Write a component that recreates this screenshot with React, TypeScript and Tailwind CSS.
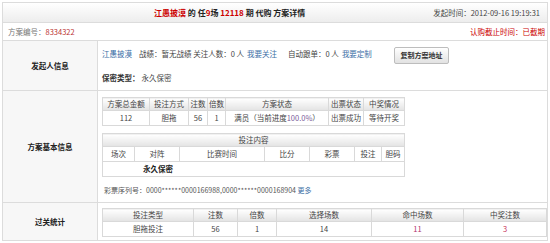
const FONT = '[font-family:"Noto_Sans_CJK_SC","Liberation_Sans",sans-serif]'

const TH = 'border border-[#d9d9d9] bg-gradient-to-b from-white to-[#e3e3e3] font-normal text-[#444] h-[13px] p-0 text-center'
const TD = 'border border-[#d9d9d9] bg-white text-[#444] h-[15px] p-0 text-center'

function Label({ children }: { children: React.ReactNode }) {
  return (
    <div className="flex items-center justify-center bg-[#f7f7f7] border-r border-[#dcdcdc] font-bold text-[#222]">
      {children}
    </div>
  )
}

export default function App() {
  return (
    <div className={`w-[550px] h-[243px] bg-white text-[7.5px] leading-none text-[#444] ${FONT}`}>
      <div className="mx-[2px] mt-[2px] border border-[#dcdcdc]">
        {/* title bar */}
        <div className="flex items-center h-[20px] bg-gradient-to-b from-white to-[#ededed] border-b border-[#dcdcdc]">
          <div className="pl-[151px] text-[8px] font-bold text-[#222] whitespace-nowrap">
            <span className="text-[#c00]">江愚披漠</span> 的 任<span className="text-[#c00]">9</span>场{' '}
            <span className="text-[#c00]">12118</span> 期 代购 方案详情
          </div>
          <div className="ml-auto pr-[7px] text-[#444] whitespace-nowrap">发起时间：2012-09-16 19:19:31</div>
        </div>

        {/* number row */}
        <div className="flex items-center h-[18px] border-b border-[#dcdcdc]">
          <div className="pl-[5px] text-[#777]">
            方案编号：<span className="text-[#b33]">8334322</span>
          </div>
          <div className="ml-auto pr-[2px] text-[#c00]">认购截止时间：已截期</div>
        </div>

        {/* sponsor info */}
        <div className="grid grid-cols-[95px_1fr] h-[50px] border-b border-[#dcdcdc]">
          <Label>发起人信息</Label>
          <div className="pl-[4px] flex flex-col">
            <div className="flex items-center h-[26px] whitespace-nowrap">
              <div className="w-[292px] flex items-center">
                <span className="text-[#3a6ea5]">江愚披漠</span>
                <span className="ml-[7px]">战绩：暂无战绩 关注人数：0 人</span>
                <span className="ml-[3px] text-[#3a6ea5]">我要关注</span>
                <span className="ml-[11px]">自动跟单：0 人</span>
                <span className="ml-[3px] text-[#3a6ea5]">我要定制</span>
              </div>
              <button className="mt-[3px] w-[55px] h-[17px] rounded-[2px] border border-[#bdbdbd] bg-gradient-to-b from-white to-[#e2e2e2] font-bold text-[#333] text-[7px]">
                复制方案地址
              </button>
            </div>
            <div className="flex items-center h-[22px]">
              <span className="font-bold text-[#333]">保密类型：</span>
              <span className="ml-[2px]">永久保密</span>
            </div>
          </div>
        </div>

        {/* basic info */}
        <div className="grid grid-cols-[95px_1fr] h-[112px] border-b border-[#dcdcdc]">
          <Label>方案基本信息</Label>
          <div className="pl-[4px] pt-[6px]">
            <table className="w-[302px] border-collapse table-fixed">
              <colgroup>
                <col className="w-[47px]" />
                <col className="w-[39px]" />
                <col className="w-[19px]" />
                <col className="w-[18px]" />
                <col className="w-[103px]" />
                <col className="w-[35px]" />
                <col className="w-[41px]" />
              </colgroup>
              <thead>
                <tr>
                  <th className={TH}>方案总金额</th>
                  <th className={TH}>投注方式</th>
                  <th className={TH}>注数</th>
                  <th className={TH}>倍数</th>
                  <th className={TH}>方案状态</th>
                  <th className={TH}>出票状态</th>
                  <th className={TH}>中奖情况</th>
                </tr>
              </thead>
              <tbody>
                <tr>
                  <td className={TD}>112</td>
                  <td className={TD}>胆拖</td>
                  <td className={`${TD} text-[#8a7f9a]`}>56</td>
                  <td className={TD}>1</td>
                  <td className={TD}>
                    满员（当前进度<span className="text-[#7a5c9a]">100.0%</span>）
                  </td>
                  <td className={TD}>出票成功</td>
                  <td className={TD}>等待开奖</td>
                </tr>
              </tbody>
            </table>

            <table className="mt-[7px] w-[302px] border-collapse table-fixed">
              <colgroup>
                <col className="w-[32px]" />
                <col className="w-[45px]" />
                <col className="w-[85px]" />
                <col className="w-[45px]" />
                <col className="w-[45px]" />
                <col className="w-[27px]" />
                <col className="w-[23px]" />
              </colgroup>
              <thead>
                <tr>
                  <th colSpan={7} className={TH}>投注内容</th>
                </tr>
                <tr>
                  <td className={`${TD} h-[13px]`}>场次</td>
                  <td className={`${TD} h-[13px]`}>对阵</td>
                  <td className={`${TD} h-[13px]`}>比赛时间</td>
                  <td className={`${TD} h-[13px]`}>比分</td>
                  <td className={`${TD} h-[13px]`}>彩票</td>
                  <td className={`${TD} h-[13px]`}>投注</td>
                  <td className={`${TD} h-[13px]`}>胆码</td>
                </tr>
              </thead>
              <tbody>
                <tr>
                  <td colSpan={7} className="border border-[#d9d9d9] h-[15px] p-0 pl-[40px] font-bold text-[#222]">
                    永久保密
                  </td>
                </tr>
              </tbody>
            </table>

            <div className="mt-[10px] pl-[2px] whitespace-nowrap text-[7px] text-[#555]">
              彩票序列号：0000******0000166988,0000******0000168904{' '}
              <span className="text-[#3a6ea5]">更多</span>
            </div>
          </div>
        </div>

        {/* pass stats */}
        <div className="grid grid-cols-[95px_1fr] h-[37px]">
          <Label>过关统计</Label>
          <div className="pl-[4px] pt-[5px] pr-[1px]">
            <table className="w-[444px] border-collapse table-fixed">
              <colgroup>
                <col className="w-[91px]" />
                <col className="w-[44px]" />
                <col className="w-[39px]" />
                <col className="w-[95px]" />
                <col className="w-[92px]" />
                <col className="w-[83px]" />
              </colgroup>
              <thead>
                <tr>
                  <th className={TH}>投注类型</th>
                  <th className={TH}>注数</th>
                  <th className={TH}>倍数</th>
                  <th className={TH}>选择场数</th>
                  <th className={TH}>命中场数</th>
                  <th className={TH}>中奖注数</th>
                </tr>
              </thead>
              <tbody>
                <tr>
                  <td className={TD}>胆拖投注</td>
                  <td className={`${TD} text-[#8a7f9a]`}>56</td>
                  <td className={TD}>1</td>
                  <td className={TD}>14</td>
                  <td className={`${TD} text-[#b0306a]`}>11</td>
                  <td className={`${TD} text-[#c8305a]`}>3</td>
                </tr>
              </tbody>
            </table>
          </div>
        </div>
      </div>
    </div>
  )
}
